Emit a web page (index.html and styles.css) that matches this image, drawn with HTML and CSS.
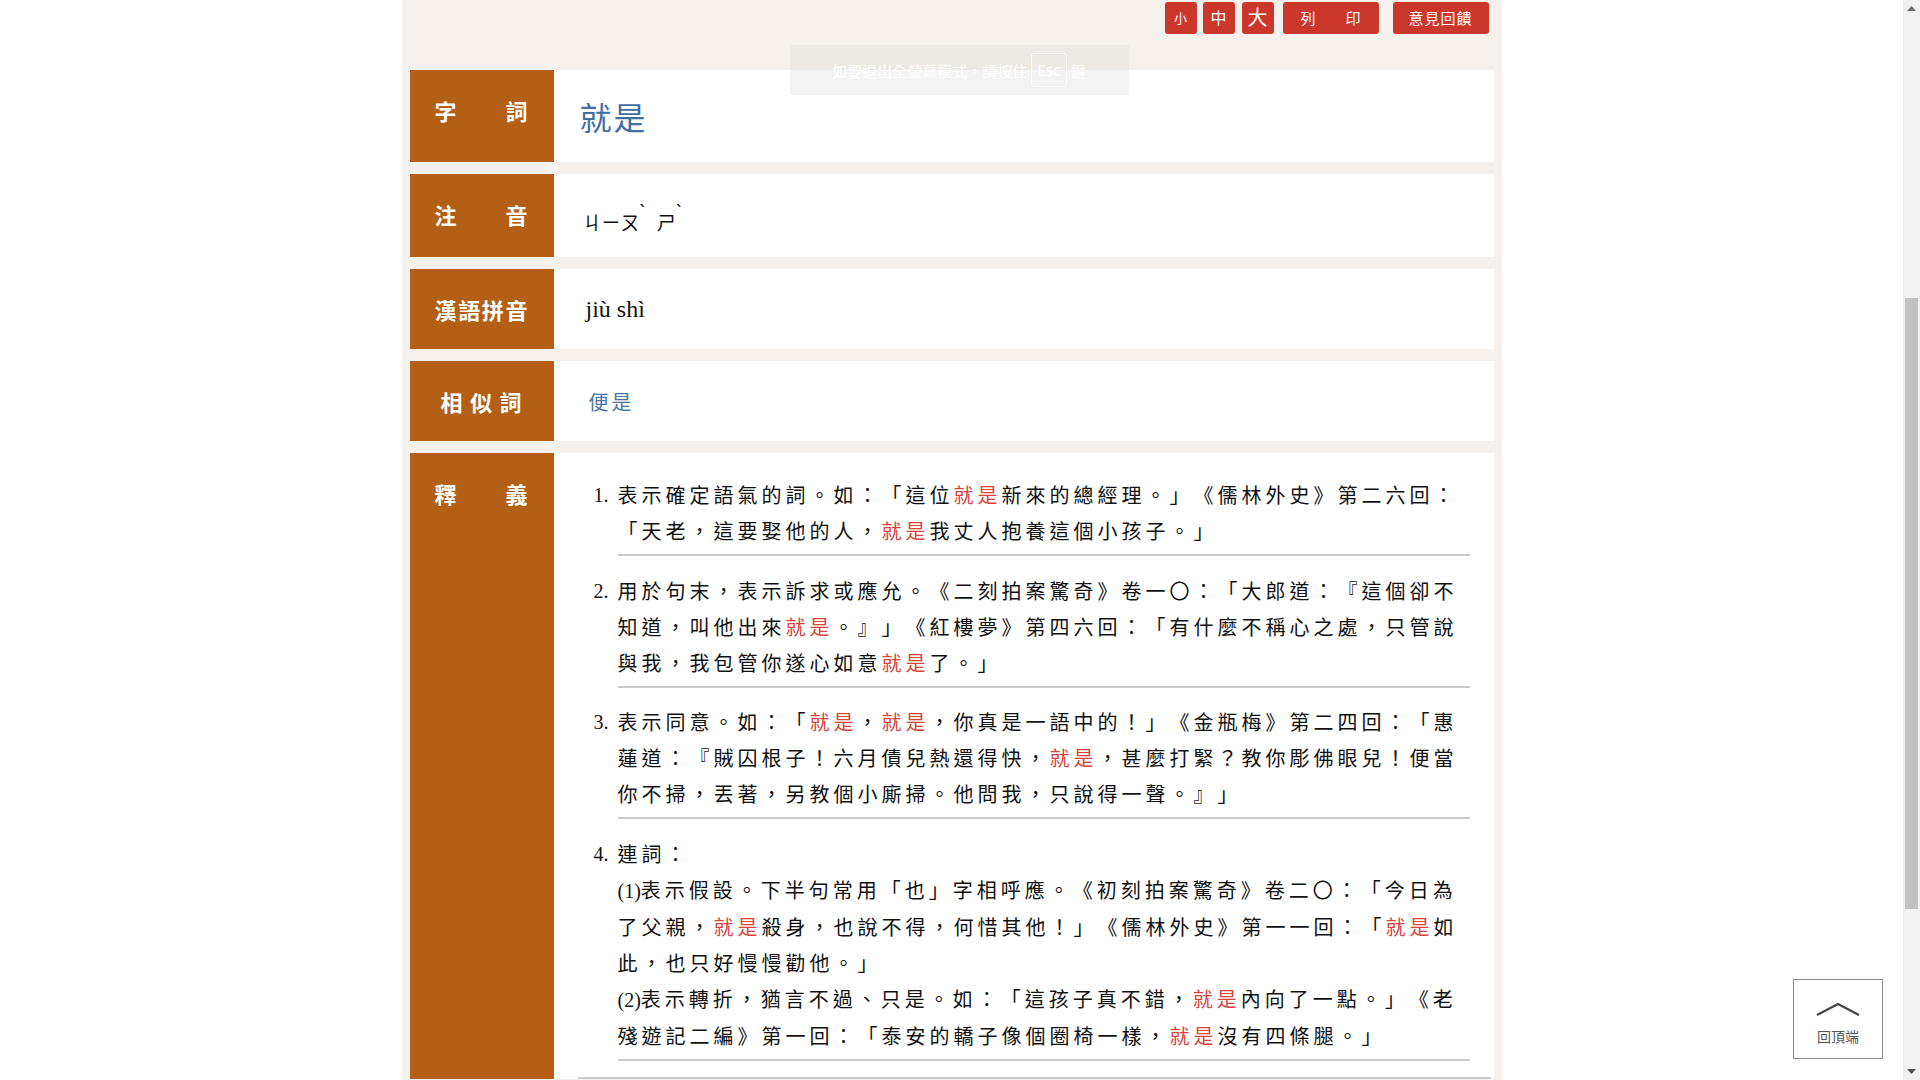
FILE: index.html
```html
<!DOCTYPE html>
<html lang="zh-Hant">
<head>
<meta charset="utf-8">
<title>就是</title>
<link rel="stylesheet" href="styles.css">
</head>
<body>
<div class="page">
  <div class="container">
    <div class="toolbar">
      <button class="btn btn-s">小</button>
      <button class="btn btn-m">中</button>
      <button class="btn btn-l">大</button>
      <button class="btn btn-print">列　　印</button>
      <button class="btn btn-feedback">意見回饋</button>
    </div>
    <div class="fs-tip">如要退出全螢幕模式，請按住 <span class="key">Esc</span> 鍵</div>

    <div class="row row-word">
      <div class="label"><span>字</span><span>詞</span></div>
      <div class="cell"><h1 class="word">就是</h1></div>
    </div>

    <div class="row row-zhuyin">
      <div class="label"><span>注</span><span>音</span></div>
      <div class="cell"><span class="zhuyin">ㄐㄧㄡ<span class="tone tone-gap">ˋ</span>ㄕ<span class="tone">ˋ</span></span></div>
    </div>

    <div class="row row-pinyin">
      <div class="label"><span>漢</span><span>語</span><span>拼</span><span>音</span></div>
      <div class="cell"><span class="pinyin">jiù shì</span></div>
    </div>

    <div class="row row-similar">
      <div class="label label-narrow"><span>相</span><span>似</span><span>詞</span></div>
      <div class="cell"><span class="similar">便是</span></div>
    </div>

    <div class="row row-def">
      <div class="label"><span>釋</span><span>義</span></div>
      <div class="cell">
        <ol class="defs">
          <li><span class="num">1.</span><div class="text">表示確定語氣的詞。如：「這位<span class="hl">就是</span>新來的總經理。」《儒林外史》第二六回：「天老，這要娶他的人，<span class="hl">就是</span>我丈人抱養這個小孩子。」</div></li>
          <li><span class="num">2.</span><div class="text">用於句末，表示訴求或應允。《二刻拍案驚奇》卷一〇：「大郎道：『這個卻不知道，叫他出來<span class="hl">就是</span>。』」《紅樓夢》第四六回：「有什麼不稱心之處，只管說與我，我包管你遂心如意<span class="hl">就是</span>了。」</div></li>
          <li><span class="num">3.</span><div class="text">表示同意。如：「<span class="hl">就是</span>，<span class="hl">就是</span>，你真是一語中的！」《金瓶梅》第二四回：「惠蓮道：『賊囚根子！六月債兒熱還得快，<span class="hl">就是</span>，甚麼打緊？教你彫佛眼兒！便當你不掃，丟著，另教個小廝掃。他問我，只說得一聲。』」</div></li>
          <li><span class="num">4.</span><div class="text">連詞：
            <p class="sub"><span class="paren">(1)</span>表示假設。下半句常用「也」字相呼應。《初刻拍案驚奇》卷二〇：「今日為了父親，<span class="hl">就是</span>殺身，也說不得，何惜其他！」《儒林外史》第一一回：「<span class="hl">就是</span>如此，也只好慢慢勸他。」</p>
            <p class="sub"><span class="paren">(2)</span>表示轉折，猶言不過、只是。如：「這孩子真不錯，<span class="hl">就是</span>內向了一點。」《老殘遊記二編》第一回：「泰安的轎子像個圈椅一樣，<span class="hl">就是</span>沒有四條腿。」</p>
          </div></li>
        </ol>
        <div class="def-end"></div>
      </div>
    </div>
  </div>

  <a class="to-top" href="#">
    <svg class="chev" width="44" height="14" viewBox="0 0 44 14"><polyline points="1,13 22,2 43,13" fill="none" stroke="#444" stroke-width="2.2"/></svg>
    <span>回頂端</span>
  </a>
</div>
<div class="scrollbar">
  <div class="sb-btn"><svg width="9" height="5" viewBox="0 0 9 5"><polygon points="0,5 4.5,0 9,5" fill="#6a6a6a"/></svg></div>
  <div class="sb-track"><div class="sb-thumb"></div></div>
  <div class="sb-btn"><svg width="9" height="5" viewBox="0 0 9 5"><polygon points="0,0 4.5,5 9,0" fill="#505050"/></svg></div>
</div>
</body>
</html>
```
FILE: styles.css
```css
* { box-sizing: border-box; }
html, body { margin: 0; height: 100%; }
body {
  display: flex;
  overflow: hidden;
  background: #fff;
  font-family: "Noto Sans CJK TC", "Noto Sans", sans-serif;
  color: #111;
}
.page { flex: 1; position: relative; overflow: hidden; }
.container {
  width: 1100px;
  margin: 0 auto;
  padding: 0 8px;
  background: #f6f1ec;
  min-height: 100%;
  position: relative;
}
.toolbar {
  height: 70px;
  display: flex;
  justify-content: flex-end;
  align-items: flex-start;
  padding: 2px 5px 0 0;
  gap: 6px;
}
.btn {
  height: 32px;
  border: 0;
  border-radius: 3px;
  background: #cc372c;
  color: #fff;
  font-family: "Noto Sans CJK TC", sans-serif;
  padding: 0 0 2px;
  display: flex;
  align-items: center;
  justify-content: center;
  line-height: 1;
}
.btn-s { width: 32px; font-size: 13px; }
.btn-m { width: 32px; font-size: 16px; }
.btn-l { width: 32px; font-size: 20px; margin-left: 1px; }
.btn-print { width: 96px; font-size: 15px; margin-left: 3px; }
.btn-feedback { width: 96px; font-size: 15px; margin-left: 8px; letter-spacing: 1px; }

.fs-tip {
  position: absolute;
  left: 388px;
  top: 45px;
  width: 339px;
  height: 50px;
  background: rgba(222, 222, 222, 0.35);
  color: #fff;
  font-size: 15px;
  display: flex;
  align-items: center;
  justify-content: center;
  gap: 4px;
}
.key {
  border: 1px solid #fff;
  border-radius: 3px;
  padding: 0 5px;
  line-height: 32px;
}

.row { display: flex; margin-bottom: 12px; background: #fff; }
.row-word { height: 92px; }
.row-zhuyin { height: 83px; }
.row-pinyin { height: 80px; }
.row-similar { height: 80px; }

.label {
  flex: 0 0 144px;
  background: #b45f16;
  color: #fff;
  font-size: 22px;
  font-weight: 700;
  line-height: 30px;
  padding: 25px 26px 0 25px;
  display: flex;
  justify-content: space-between;
  align-items: flex-start;
}
.label-narrow { padding-left: 31px; padding-right: 32px; }

.cell { flex: 1; display: flex; align-items: center; }

.word {
  margin: 0;
  padding-left: 26px;
  font-size: 32px;
  font-weight: 400;
  color: #3f6fa3;
  letter-spacing: 2px;
  line-height: 1.2;
}
.zhuyin {
  padding: 6px 0 0 29px;
  font-size: 19px;
  color: #111;
}
.tone {
  font-family: "Noto Sans", sans-serif;
  font-size: 19px;
  vertical-align: 11px;
  line-height: 1;
}
.tone-gap { margin-right: 12px; }
.pinyin {
  padding-left: 32px;
  font-family: "Liberation Serif", serif;
  font-size: 24px;
  color: #111;
}
.similar {
  padding-left: 35px;
  font-size: 20px;
  letter-spacing: 3px;
  color: #4675a8;
}

.row-def .cell { display: block; padding: 24px 24px 0 40px; }
.defs { list-style: none; margin: 0; padding: 0; }
.defs li {
  display: flex;
  margin-bottom: 16.5px;
  font-size: 20px;
  line-height: 36px;
  letter-spacing: 4px;
}
.num {
  flex: 0 0 24px;
  font-family: "Liberation Serif", serif;
  letter-spacing: 0;
}
.text {
  flex: 1;
  padding-bottom: 5px;
  border-bottom: 2px solid #cccccc;
  text-spacing-trim: space-all;
}
.sub { margin: 0; }
.paren { font-family: "Liberation Serif", serif; letter-spacing: 0; }
.hl { color: #d8443a; }
.def-end { border-top: 2px solid #cccccc; margin: 2px -21px 0 -16px; }

.to-top {
  position: absolute;
  right: 20px;
  bottom: 21px;
  width: 90px;
  height: 80px;
  border: 1px solid #8a8a8a;
  background: #fff;
  display: flex;
  flex-direction: column;
  align-items: center;
  padding-top: 22px;
  gap: 12px;
  color: #555;
  font-size: 14px;
  line-height: 16px;
  text-decoration: none;
}
.chev { display: block; }

.scrollbar {
  flex: 0 0 17px;
  background: #f1f1f1;
  display: flex;
  flex-direction: column;
}
.sb-btn { height: 17px; display: flex; align-items: center; justify-content: center; }
.sb-track { flex: 1; padding-top: 281px; }
.sb-thumb { height: 611px; margin: 0 2px; background: #c1c1c1; }
```
